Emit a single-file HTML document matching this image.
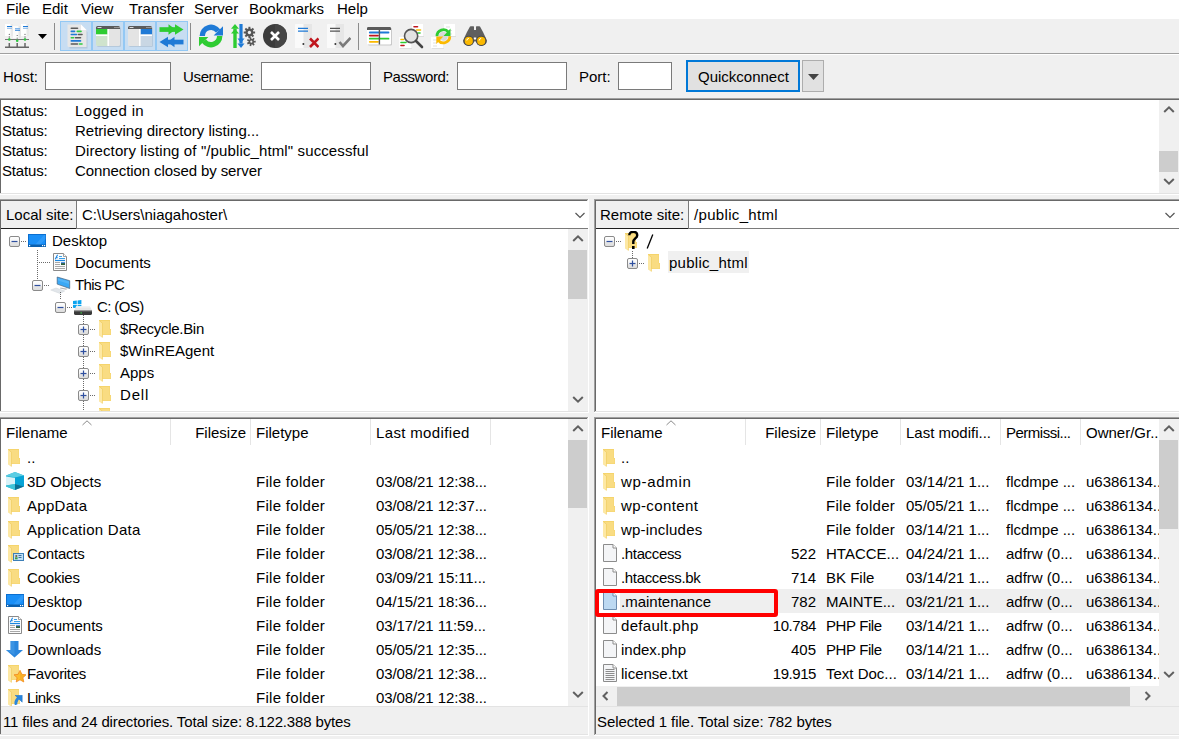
<!DOCTYPE html>
<html><head><meta charset="utf-8"><style>
html,body{margin:0;padding:0}
body{width:1179px;height:739px;overflow:hidden;position:relative;background:#f0f0f0;font-family:'Liberation Sans',sans-serif;color:#000;font-size:15px}
svg{display:block}
</style></head><body>
<div style="position:absolute;left:0px;top:0px;width:1179px;height:19px;background:#fff"></div>
<div style="position:absolute;left:6px;top:-1px;line-height:20px;font-size:15px;white-space:pre;">File</div>
<div style="position:absolute;left:42px;top:-1px;line-height:20px;font-size:15px;white-space:pre;">Edit</div>
<div style="position:absolute;left:81px;top:-1px;line-height:20px;font-size:15px;white-space:pre;">View</div>
<div style="position:absolute;left:129px;top:-1px;line-height:20px;font-size:15px;white-space:pre;">Transfer</div>
<div style="position:absolute;left:194px;top:-1px;line-height:20px;font-size:15px;white-space:pre;">Server</div>
<div style="position:absolute;left:249px;top:-1px;line-height:20px;font-size:15px;white-space:pre;">Bookmarks</div>
<div style="position:absolute;left:337px;top:-1px;line-height:20px;font-size:15px;white-space:pre;">Help</div>
<div style="position:absolute;left:0px;top:19px;width:1179px;height:34px;background:#f0f0f0"></div>
<div style="position:absolute;left:0px;top:53px;width:1179px;height:1px;background:#a0a0a0"></div>
<div style="position:absolute;left:0px;top:54px;width:1179px;height:1px;background:#fff"></div>
<svg style="position:absolute;left:5px;top:24px" width="24" height="24" viewBox="0 0 24 24"><rect x="0" y="0" width="8" height="12" fill="#fff"/><rect x="5.5" y="0" width="2.5" height="12" fill="#e9e9e9"/><rect x="16" y="0" width="8" height="12" fill="#fff"/><rect x="21.5" y="0" width="2.5" height="12" fill="#e9e9e9"/><rect x="8" y="2" width="8" height="12" fill="#fcfcfc"/><rect x="13.5" y="2" width="2.5" height="12" fill="#e6e6e6"/><path d="M2 2.5H7M18 2.5H23M10 6.3H15" stroke="#1f7ad6" stroke-width="1.1"/><path d="M2 4.2H7M18 4.2H23M10 4.6H15" stroke="#7fb4ea" stroke-width="1.1"/><circle cx="4.3" cy="10.3" r="0.6" fill="#555"/><circle cx="12.2" cy="11.5" r="0.6" fill="#555"/><circle cx="20" cy="10.3" r="0.6" fill="#555"/><path d="M4.3 12V15M12.2 13.5V16.5M20 12V15" stroke="#888" stroke-width="0.9"/><rect x="0" y="15" width="24" height="1" fill="#777"/><circle cx="4.3" cy="15.5" r="1.3" fill="#2ec840"/><circle cx="12.2" cy="16.7" r="1.3" fill="#2ec840"/><circle cx="20" cy="15.5" r="1.3" fill="#2ec840"/><path d="M4.3 19V23M12.2 19V23M20 19V23" stroke="#666" stroke-width="1.5"/><rect x="0" y="22.5" width="24" height="1.5" fill="#666"/></svg>
<svg style="position:absolute;left:38px;top:34px" width="9" height="5" viewBox="0 0 9 5"><path d="M0 0H9L4.5 5Z" fill="#000"/></svg>
<div style="position:absolute;left:54px;top:23px;width:1px;height:27px;background:#8c8c8c"></div>
<div style="position:absolute;left:60px;top:21px;width:32px;height:30px;background:#c7ddf2;border:1px solid #93c8f4;box-sizing:border-box"></div>
<div style="position:absolute;left:92px;top:21px;width:32px;height:30px;background:#c7ddf2;border:1px solid #93c8f4;box-sizing:border-box"></div>
<div style="position:absolute;left:124px;top:21px;width:32px;height:30px;background:#c7ddf2;border:1px solid #93c8f4;box-sizing:border-box"></div>
<div style="position:absolute;left:156px;top:21px;width:32px;height:30px;background:#c7ddf2;border:1px solid #93c8f4;box-sizing:border-box"></div>
<svg style="position:absolute;left:67px;top:24px" width="21" height="25" viewBox="0 0 21 25"><path d="M1.5 1.5H14L19.5 7V23.5H1.5Z" fill="#b3c8dc" transform="translate(1,1)"/><path d="M0.5 0.5H14L19.5 6V23H2A1.5 1.5 0 0 1 0.5 21.5Z" fill="#e7e7e7"/><path d="M14 0.5V6H19.5Z" fill="#fff"/><g stroke-linecap="round" stroke-width="1.6"><path d="M4.3 4.3H10.5" stroke="#5a5a5a"/><path d="M4.3 7.4H7.5" stroke="#1f7ad6"/><path d="M10.3 7.4H14" stroke="#2ecc40"/><path d="M4.3 10.5H9.5" stroke="#1f7ad6"/><path d="M11.5 10.5H15" stroke="#5a5a5a"/><path d="M4.3 13.7H6.5" stroke="#2ecc40"/><path d="M8.5 13.7H13.5" stroke="#5a5a5a"/><path d="M4.3 16.9H13.5" stroke="#1f7ad6"/><path d="M4.3 20H10.5" stroke="#5a5a5a"/><path d="M12.5 20H15" stroke="#2ecc40"/></g></svg>
<svg style="position:absolute;left:96px;top:26px" width="26" height="22" viewBox="0 0 26 22"><rect x="1" y="1" width="24" height="20" rx="1.5" fill="#b5c9dc"/><rect x="0" y="0" width="24" height="20" rx="1.5" fill="#e4e4e4"/><path d="M1.5 0H22.5A1.5 1.5 0 0 1 24 1.5V3H0V1.5A1.5 1.5 0 0 1 1.5 0Z" fill="#5a5a5a"/><rect x="0" y="3" width="11.5" height="5.5" fill="#2ecc32"/><rect x="0" y="8.5" width="11.5" height="1.5" fill="#fff"/><path d="M0 10H11.5V20H1.5A1.5 1.5 0 0 1 0 18.5Z" fill="#cfe3cd"/><rect x="11.5" y="3" width="1.5" height="17" fill="#fff"/><rect x="1.5" y="1" width="4" height="1" fill="#ddd"/><circle cx="19" cy="1.5" r="0.6" fill="#ddd"/><circle cx="21" cy="1.5" r="0.6" fill="#ddd"/><circle cx="23" cy="1.5" r="0.6" fill="#ddd"/></svg>
<svg style="position:absolute;left:128px;top:26px" width="26" height="22" viewBox="0 0 26 22"><rect x="1" y="1" width="24" height="20" rx="1.5" fill="#b5c9dc"/><rect x="0" y="0" width="24" height="20" rx="1.5" fill="#e4e4e4"/><path d="M1.5 0H22.5A1.5 1.5 0 0 1 24 1.5V3H0V1.5A1.5 1.5 0 0 1 1.5 0Z" fill="#5a5a5a"/><rect x="12.5" y="3" width="11.5" height="5.5" fill="#1f7ad6"/><rect x="12.5" y="8.5" width="11.5" height="1.5" fill="#fff"/><path d="M12.5 10H24V18.5A1.5 1.5 0 0 1 22.5 20H12.5Z" fill="#c9d7e4"/><rect x="11" y="3" width="1.5" height="17" fill="#fff"/><rect x="1.5" y="1" width="4" height="1" fill="#ddd"/><circle cx="19" cy="1.5" r="0.6" fill="#ddd"/><circle cx="21" cy="1.5" r="0.6" fill="#ddd"/><circle cx="23" cy="1.5" r="0.6" fill="#ddd"/></svg>
<svg style="position:absolute;left:159px;top:24px" width="25" height="24" viewBox="0 0 25 24"><path d="M0.5 3.2H20V7.9H0.5Z" fill="#2ecc32"/><path d="M9.5 0.2L16.5 5.5L9.5 10.8Z" fill="#2ecc32"/><path d="M16 0.2L24.5 5.5L16 10.8Z" fill="#2ecc32"/><path d="M24.5 15.7H5V20.4H24.5Z" fill="#1f7ad6"/><path d="M15.5 12.7L8.5 18L15.5 23.3Z" fill="#1f7ad6"/><path d="M9 12.7L0.5 18L9 23.3Z" fill="#1f7ad6"/></svg>
<div style="position:absolute;left:190px;top:23px;width:1px;height:27px;background:#8c8c8c"></div>
<svg style="position:absolute;left:199px;top:24px" width="24" height="24" viewBox="0 0 24 24"><path d="M3.3 12 A8.7 8.7 0 0 1 19.1 7" stroke="#1f7ad6" stroke-width="5.4" fill="none"/><path d="M24 2.3V11.6H14.6Z" fill="#1f7ad6"/><path d="M20.7 12 A8.7 8.7 0 0 1 4.9 17" stroke="#2ecc32" stroke-width="5.4" fill="none"/><path d="M0 22.2V12.9H9.4Z" fill="#2ecc32"/></svg>
<svg style="position:absolute;left:231px;top:24px" width="14" height="24" viewBox="0 0 14 24"><path d="M4 24V4.5" stroke="#2ecc32" stroke-width="3.4"/><path d="M4 0L8 4.8H0Z" fill="#2ecc32"/><path d="M4 5L8 9.5H0Z" fill="#2ecc32"/><path d="M10 0V19.5" stroke="#1f7ad6" stroke-width="3.2"/><path d="M10 24L13.5 19.5H6.5Z" fill="#1f7ad6"/><path d="M10 19L13.5 14.5H6.5Z" fill="#1f7ad6"/></svg>
<svg style="position:absolute;left:243px;top:24px" width="14" height="24" viewBox="0 0 14 24"><circle cx="6.4" cy="8.5" r="3.9" fill="#555"/><g stroke="#555" stroke-width="2.0"><path d="M9.30 8.50L12.10 8.50"/><path d="M8.45 10.55L10.43 12.53"/><path d="M6.40 11.40L6.40 14.20"/><path d="M4.35 10.55L2.37 12.53"/><path d="M3.50 8.50L0.70 8.50"/><path d="M4.35 6.45L2.37 4.47"/><path d="M6.40 5.60L6.40 2.80"/><path d="M8.45 6.45L10.43 4.47"/></g><circle cx="6.4" cy="8.5" r="1.64" fill="#f0f0f0"/><circle cx="8.3" cy="17.7" r="2.6" fill="#555"/><g stroke="#555" stroke-width="1.7"><path d="M9.90 17.70L12.70 17.70"/><path d="M9.30 18.95L11.04 21.14"/><path d="M7.94 19.26L7.32 21.99"/><path d="M6.86 18.39L4.34 19.61"/><path d="M6.86 17.01L4.34 15.79"/><path d="M7.94 16.14L7.32 13.41"/><path d="M9.30 16.45L11.04 14.26"/></g><circle cx="8.3" cy="17.7" r="1.09" fill="#f0f0f0"/></svg>
<svg style="position:absolute;left:263px;top:24px" width="24" height="24" viewBox="0 0 24 24"><circle cx="12" cy="12" r="12" fill="#3c3c3c"/><path d="M12 0A12 12 0 0 1 12 24Z" fill="#454545"/><path d="M8 8L16 16M16 8L8 16" stroke="#fff" stroke-width="2.6"/></svg>
<svg style="position:absolute;left:295px;top:24px" width="24" height="24" viewBox="0 0 24 24"><rect x="0" y="0" width="17" height="24" rx="0.5" fill="#fafafa"/><rect x="8.5" y="0" width="8.5" height="24" fill="#e6e6e6"/><path d="M3 4.3H13M3 7.2H13" stroke="#1f7ad6" stroke-width="1.3"/><circle cx="8.4" cy="20" r="1" fill="#333"/><path d="M15 14.5L23.5 23M23.5 14.5L15 23" stroke="#c0161e" stroke-width="2.6"/></svg>
<svg style="position:absolute;left:327px;top:24px" width="24" height="24" viewBox="0 0 24 24"><rect x="0" y="0" width="17" height="24" rx="0.5" fill="#fafafa"/><rect x="8.5" y="0" width="8.5" height="24" fill="#e6e6e6"/><path d="M3 4.3H13M3 7.2H13" stroke="#555" stroke-width="1.3"/><circle cx="8.4" cy="20" r="1" fill="#333"/><path d="M12.5 18L16 22L23.5 14" stroke="#7a7a7a" stroke-width="2.6" fill="none"/></svg>
<div style="position:absolute;left:358px;top:23px;width:1px;height:27px;background:#8c8c8c"></div>
<svg style="position:absolute;left:367px;top:27px" width="26" height="19" viewBox="0 0 26 19"><rect x="1" y="1" width="24" height="17.5" rx="1.2" fill="#c9c9c9"/><rect x="0" y="0" width="24" height="17.5" rx="1.2" fill="#fff"/><path d="M1.2 0H22.8A1.2 1.2 0 0 1 24 1.2V3H0V1.2A1.2 1.2 0 0 1 1.2 0Z" fill="#5a5a5a"/><g stroke-width="1.8" stroke-linecap="round"><path d="M2.8 5.5H21.5" stroke="#1f7ad6"/><path d="M2.8 8.6H11" stroke="#c0161e"/><path d="M2.8 11.7H21.5" stroke="#2ecc32"/><path d="M2.8 14.8H11" stroke="#fbb900"/></g><rect x="11.7" y="3" width="1.4" height="14.5" fill="#555"/></svg>
<svg style="position:absolute;left:399px;top:24px" width="25" height="25" viewBox="0 0 25 25"><rect x="13" y="0" width="11" height="12" fill="#fff"/><rect x="14" y="12" width="11" height="1" fill="#ddd"/><path d="M15 2.7H18.5" stroke="#c0161e" stroke-width="1.6" stroke-linecap="round"/><path d="M17.5 6H21.5" stroke="#fbb900" stroke-width="1.6" stroke-linecap="round"/><path d="M19 9H21" stroke="#2ecc32" stroke-width="1.6" stroke-linecap="round"/><rect x="0.2" y="13" width="12" height="11" fill="#fff"/><rect x="1" y="24" width="12" height="0.8" fill="#ddd"/><path d="M2 15.5H4.5" stroke="#fbb900" stroke-width="1.6" stroke-linecap="round"/><path d="M2 18.5H7" stroke="#2ecc32" stroke-width="1.6" stroke-linecap="round"/><path d="M2 21.5H5" stroke="#c0161e" stroke-width="1.6" stroke-linecap="round"/><circle cx="12.1" cy="12" r="6.6" fill="#e2e2e2" stroke="#555" stroke-width="1.6"/><path d="M17 17L23 23" stroke="#444" stroke-width="2.6" stroke-linecap="round"/></svg>
<svg style="position:absolute;left:431px;top:24px" width="25" height="25" viewBox="0 0 25 25"><rect x="13" y="0" width="11" height="12" fill="#fff"/><rect x="14" y="12" width="11" height="1" fill="#ddd"/><path d="M15 3H19M17 6.5H21M17 10H21" stroke="#e0e0e0" stroke-width="1.2"/><rect x="0" y="13" width="12" height="11" fill="#fff"/><rect x="1" y="24" width="12" height="0.8" fill="#ddd"/><path d="M2 16H6M2 19H6M2 22H6" stroke="#e0e0e0" stroke-width="1.2"/><circle cx="12.4" cy="12.3" r="4.5" fill="#d8d8d8"/><path d="M6 12.3A6.4 6.4 0 0 1 17.5 8.3" stroke="#2ecc32" stroke-width="2.8" fill="none"/><path d="M19.5 4.5V12H12.5Z" fill="#2ecc32"/><path d="M18.8 12.3A6.4 6.4 0 0 1 7.3 16.3" stroke="#fbb900" stroke-width="2.8" fill="none"/><path d="M5.3 20V12.5H12.3Z" fill="#fbb900"/></svg>
<svg style="position:absolute;left:463px;top:26px" width="24" height="21" viewBox="0 0 24 21"><path d="M7 0.5C8 0 10 0 11 0.5V4H13V0.5C14 0 16 0 17 0.5L20 6L24 14.5A5.5 5.5 0 0 1 13.5 16.5L12 15L10.5 16.5A5.5 5.5 0 0 1 0 14.5L4 6Z" fill="#5f5f5f"/><rect x="10.8" y="11.5" width="2.4" height="2" fill="#fff"/><circle cx="5.8" cy="14.9" r="5.1" fill="#4a4a4a"/><circle cx="18.2" cy="14.9" r="5.1" fill="#4a4a4a"/><circle cx="5.8" cy="14.9" r="4.1" fill="#fbb900"/><circle cx="18.2" cy="14.9" r="4.1" fill="#fbb900"/><path d="M3.8 14.5A2.3 2.3 0 0 1 5.8 12.4" stroke="#fff" stroke-width="1" fill="none"/><path d="M16.2 14.5A2.3 2.3 0 0 1 18.2 12.4" stroke="#fff" stroke-width="1" fill="none"/></svg>
<div style="position:absolute;left:3px;top:67px;line-height:20px;font-size:15px;white-space:pre;">Host:</div>
<div style="position:absolute;left:45px;top:62px;width:126px;height:28px;background:#fff;border:1px solid #7a7a7a;box-sizing:border-box"></div>
<div style="position:absolute;left:183px;top:67px;line-height:20px;font-size:15px;white-space:pre;letter-spacing:-0.35px">Username:</div>
<div style="position:absolute;left:261px;top:62px;width:110px;height:28px;background:#fff;border:1px solid #7a7a7a;box-sizing:border-box"></div>
<div style="position:absolute;left:383px;top:67px;line-height:20px;font-size:15px;white-space:pre;letter-spacing:-0.44px">Password:</div>
<div style="position:absolute;left:457px;top:62px;width:110px;height:28px;background:#fff;border:1px solid #7a7a7a;box-sizing:border-box"></div>
<div style="position:absolute;left:579px;top:67px;line-height:20px;font-size:15px;white-space:pre;">Port:</div>
<div style="position:absolute;left:618px;top:62px;width:54px;height:28px;background:#fff;border:1px solid #7a7a7a;box-sizing:border-box"></div>
<div style="position:absolute;left:686px;top:60px;width:114px;height:32px;background:#e1e1e1;border:2px solid #0078d7;box-sizing:border-box"></div>
<div style="position:absolute;left:698px;top:67px;line-height:20px;font-size:15px;white-space:pre;">Quickconnect</div>
<div style="position:absolute;left:802px;top:60px;width:22px;height:32px;background:#e1e1e1;border:1px solid #adadad;box-sizing:border-box"></div>
<svg style="position:absolute;left:808px;top:74px" width="11" height="6" viewBox="0 0 11 6"><path d="M0 0H11L5.5 6Z" fill="#444"/></svg>
<div style="position:absolute;left:-1px;top:98px;width:1182px;height:1px;background:#a0a0a0"></div>
<div style="position:absolute;left:-1px;top:98px;width:1px;height:97px;background:#a0a0a0"></div>
<div style="position:absolute;left:-1px;top:194px;width:1182px;height:1px;background:#fff"></div>
<div style="position:absolute;left:1180px;top:98px;width:1px;height:97px;background:#fff"></div>
<div style="position:absolute;left:0px;top:99px;width:1180px;height:1px;background:#696969"></div>
<div style="position:absolute;left:0px;top:99px;width:1px;height:95px;background:#696969"></div>
<div style="position:absolute;left:0px;top:193px;width:1180px;height:1px;background:#e3e3e3"></div>
<div style="position:absolute;left:1179px;top:99px;width:1px;height:95px;background:#e3e3e3"></div>
<div style="position:absolute;left:1px;top:100px;width:1178px;height:93px;background:#fff"></div>
<div style="position:absolute;left:2px;top:101px;line-height:20px;font-size:15px;white-space:pre;letter-spacing:-0.15px">Status:</div>
<div style="position:absolute;left:75px;top:101px;line-height:20px;font-size:15px;white-space:pre;letter-spacing:0.35px">Logged in</div>
<div style="position:absolute;left:2px;top:121px;line-height:20px;font-size:15px;white-space:pre;letter-spacing:-0.15px">Status:</div>
<div style="position:absolute;left:75px;top:121px;line-height:20px;font-size:15px;white-space:pre;">Retrieving directory listing...</div>
<div style="position:absolute;left:2px;top:141px;line-height:20px;font-size:15px;white-space:pre;letter-spacing:-0.15px">Status:</div>
<div style="position:absolute;left:75px;top:141px;line-height:20px;font-size:15px;white-space:pre;letter-spacing:0.12px">Directory listing of "/public_html" successful</div>
<div style="position:absolute;left:2px;top:161px;line-height:20px;font-size:15px;white-space:pre;letter-spacing:-0.15px">Status:</div>
<div style="position:absolute;left:75px;top:161px;line-height:20px;font-size:15px;white-space:pre;letter-spacing:-0.09px">Connection closed by server</div>
<div style="position:absolute;left:1159px;top:100px;width:20px;height:93px;background:#f0f0f0"></div>
<div style="position:absolute;left:1159px;top:151px;width:19px;height:21px;background:#cdcdcd"></div>
<svg style="position:absolute;left:1163px;top:105px" width="12" height="9" viewBox="0 0 12 9"><path d="M1.2 7L6 2.3L10.8 7" stroke="#606060" stroke-width="2" fill="none"/></svg>
<svg style="position:absolute;left:1163px;top:177px" width="12" height="9" viewBox="0 0 12 9"><path d="M1.2 2L6 6.7L10.8 2" stroke="#606060" stroke-width="2" fill="none"/></svg>
<div style="position:absolute;left:-1px;top:199px;width:590px;height:1px;background:#a0a0a0"></div>
<div style="position:absolute;left:-1px;top:199px;width:1px;height:214px;background:#a0a0a0"></div>
<div style="position:absolute;left:-1px;top:412px;width:590px;height:1px;background:#fff"></div>
<div style="position:absolute;left:588px;top:199px;width:1px;height:214px;background:#fff"></div>
<div style="position:absolute;left:0px;top:200px;width:588px;height:1px;background:#696969"></div>
<div style="position:absolute;left:0px;top:200px;width:1px;height:212px;background:#696969"></div>
<div style="position:absolute;left:0px;top:411px;width:588px;height:1px;background:#e3e3e3"></div>
<div style="position:absolute;left:587px;top:200px;width:1px;height:212px;background:#e3e3e3"></div>
<div style="position:absolute;left:1px;top:201px;width:587px;height:210px;background:#fff"></div>
<div style="position:absolute;left:1px;top:201px;width:75px;height:27px;background:#f0f0f0"></div>
<div style="position:absolute;left:1px;top:228px;width:75px;height:1px;background:#1e1e1e"></div>
<div style="position:absolute;left:76px;top:201px;width:1px;height:28px;background:#7a7a7a"></div>
<div style="position:absolute;left:76px;top:228px;width:512px;height:1px;background:#7a7a7a"></div>
<div style="position:absolute;left:6px;top:205px;line-height:20px;font-size:15px;white-space:pre;">Local site:</div>
<div style="position:absolute;left:82px;top:205px;line-height:20px;font-size:15px;white-space:pre;">C:\Users\niagahoster\</div>
<svg style="position:absolute;left:575px;top:212px" width="10" height="7" viewBox="0 0 10 7"><path d="M0.5 1L5 5.5L9.5 1" stroke="#555" stroke-width="1.2" fill="none"/></svg>
<div style="position:absolute;left:568px;top:229px;width:20px;height:182px;background:#f0f0f0"></div>
<div style="position:absolute;left:568px;top:250px;width:19px;height:49px;background:#cdcdcd"></div>
<svg style="position:absolute;left:572px;top:234px" width="12" height="9" viewBox="0 0 12 9"><path d="M1.2 7L6 2.3L10.8 7" stroke="#606060" stroke-width="2" fill="none"/></svg>
<svg style="position:absolute;left:572px;top:395px" width="12" height="9" viewBox="0 0 12 9"><path d="M1.2 2L6 6.7L10.8 2" stroke="#606060" stroke-width="2" fill="none"/></svg>
<div style="position:absolute;left:594px;top:199px;width:590px;height:1px;background:#a0a0a0"></div>
<div style="position:absolute;left:594px;top:199px;width:1px;height:214px;background:#a0a0a0"></div>
<div style="position:absolute;left:594px;top:412px;width:590px;height:1px;background:#fff"></div>
<div style="position:absolute;left:1183px;top:199px;width:1px;height:214px;background:#fff"></div>
<div style="position:absolute;left:595px;top:200px;width:588px;height:1px;background:#696969"></div>
<div style="position:absolute;left:595px;top:200px;width:1px;height:212px;background:#696969"></div>
<div style="position:absolute;left:595px;top:411px;width:588px;height:1px;background:#e3e3e3"></div>
<div style="position:absolute;left:1182px;top:200px;width:1px;height:212px;background:#e3e3e3"></div>
<div style="position:absolute;left:596px;top:201px;width:583px;height:210px;background:#fff"></div>
<div style="position:absolute;left:596px;top:201px;width:92px;height:27px;background:#f0f0f0"></div>
<div style="position:absolute;left:596px;top:228px;width:92px;height:1px;background:#1e1e1e"></div>
<div style="position:absolute;left:688px;top:201px;width:1px;height:28px;background:#7a7a7a"></div>
<div style="position:absolute;left:688px;top:228px;width:491px;height:1px;background:#7a7a7a"></div>
<div style="position:absolute;left:600px;top:205px;line-height:20px;font-size:15px;white-space:pre;">Remote site:</div>
<div style="position:absolute;left:694px;top:205px;line-height:20px;font-size:15px;white-space:pre;letter-spacing:0.33px">/public_html</div>
<svg style="position:absolute;left:1165px;top:212px" width="10" height="7" viewBox="0 0 10 7"><path d="M0.5 1L5 5.5L9.5 1" stroke="#555" stroke-width="1.2" fill="none"/></svg>
<div style="position:absolute;left:1px;top:229px;width:567px;height:182px;overflow:hidden"><div style="position:absolute;left:-1px;top:-229px;width:1179px;height:739px"><svg style="position:absolute;left:9px;top:236px" width="11" height="11" viewBox="0 0 11 11"><defs><linearGradient id="eg" x1="0" y1="0" x2="0" y2="1"><stop offset="0" stop-color="#fff"/><stop offset="0.5" stop-color="#f4f4f4"/><stop offset="0.55" stop-color="#e6e6e6"/><stop offset="1" stop-color="#dcdcdc"/></linearGradient></defs><rect x="0.5" y="0.5" width="10" height="10" rx="1.5" fill="url(#eg)" stroke="#8a8a8a"/><path d="M2.5 5.5H8.5" stroke="#2f4f9f" stroke-width="1.2"/></svg>
<div style="position:absolute;left:21px;top:241px;width:1px;height:1px;background:#6a6a6a"></div>
<div style="position:absolute;left:23px;top:241px;width:1px;height:1px;background:#6a6a6a"></div>
<div style="position:absolute;left:25px;top:241px;width:1px;height:1px;background:#6a6a6a"></div>
<svg style="position:absolute;left:28px;top:234px" width="18" height="13" viewBox="0 0 18 13"><rect x="0.5" y="0.5" width="17" height="12" fill="#1a8ff7" stroke="#0b6fd0"/><path d="M6 12L16 1H17.5V5L11 12Z" fill="#3aa2fb" opacity="0.6"/><rect x="0" y="10.5" width="18" height="2.5" fill="#0a5fae"/><rect x="1" y="11" width="1.2" height="1.2" fill="#fff"/><rect x="14" y="11" width="1.2" height="1.2" fill="#fff"/><rect x="16" y="11" width="1.2" height="1.2" fill="#fff"/></svg>
<div style="position:absolute;left:52px;top:231px;line-height:20px;font-size:15px;white-space:pre;">Desktop</div>
<div style="position:absolute;left:37px;top:250px;width:1px;height:1px;background:#6a6a6a"></div>
<div style="position:absolute;left:37px;top:252px;width:1px;height:1px;background:#6a6a6a"></div>
<div style="position:absolute;left:37px;top:254px;width:1px;height:1px;background:#6a6a6a"></div>
<div style="position:absolute;left:37px;top:256px;width:1px;height:1px;background:#6a6a6a"></div>
<div style="position:absolute;left:37px;top:258px;width:1px;height:1px;background:#6a6a6a"></div>
<div style="position:absolute;left:37px;top:260px;width:1px;height:1px;background:#6a6a6a"></div>
<div style="position:absolute;left:37px;top:262px;width:1px;height:1px;background:#6a6a6a"></div>
<div style="position:absolute;left:37px;top:264px;width:1px;height:1px;background:#6a6a6a"></div>
<div style="position:absolute;left:37px;top:266px;width:1px;height:1px;background:#6a6a6a"></div>
<div style="position:absolute;left:37px;top:268px;width:1px;height:1px;background:#6a6a6a"></div>
<div style="position:absolute;left:37px;top:270px;width:1px;height:1px;background:#6a6a6a"></div>
<div style="position:absolute;left:37px;top:272px;width:1px;height:1px;background:#6a6a6a"></div>
<div style="position:absolute;left:37px;top:274px;width:1px;height:1px;background:#6a6a6a"></div>
<div style="position:absolute;left:37px;top:276px;width:1px;height:1px;background:#6a6a6a"></div>
<div style="position:absolute;left:37px;top:278px;width:1px;height:1px;background:#6a6a6a"></div>
<div style="position:absolute;left:39px;top:262px;width:1px;height:1px;background:#6a6a6a"></div>
<div style="position:absolute;left:41px;top:262px;width:1px;height:1px;background:#6a6a6a"></div>
<div style="position:absolute;left:43px;top:262px;width:1px;height:1px;background:#6a6a6a"></div>
<div style="position:absolute;left:45px;top:262px;width:1px;height:1px;background:#6a6a6a"></div>
<div style="position:absolute;left:47px;top:262px;width:1px;height:1px;background:#6a6a6a"></div>
<div style="position:absolute;left:49px;top:262px;width:1px;height:1px;background:#6a6a6a"></div>
<svg style="position:absolute;left:53px;top:253px" width="14" height="18" viewBox="0 0 14 18"><path d="M0.5 0.5H10.5L13.5 3.5V17.5H0.5Z" fill="#fcfcfc" stroke="#8a8a8a"/><path d="M10.5 0.5V3.5H13.5" fill="#fff" stroke="#8a8a8a" stroke-width="0.8"/><path d="M2.2 6.3L4.6 1.8M3 4.8H4.8" stroke="#1e88e5" stroke-width="1.1"/><path d="M6 3.5H9M6 5.5H12" stroke="#3aa0ea" stroke-width="1"/><path d="M2 7.5H12" stroke="#1a86e0" stroke-width="1.2"/><path d="M2 9.5H7M2 11.5H7M2 13.5H12M2 15.5H12" stroke="#a8a8a8" stroke-width="1"/><rect x="8" y="9" width="4" height="3" fill="#2f5f3a"/><rect x="8" y="9" width="4" height="1.2" fill="#5a90e0"/></svg>
<div style="position:absolute;left:75px;top:253px;line-height:20px;font-size:15px;white-space:pre;">Documents</div>
<svg style="position:absolute;left:32px;top:280px" width="11" height="11" viewBox="0 0 11 11"><defs><linearGradient id="eg" x1="0" y1="0" x2="0" y2="1"><stop offset="0" stop-color="#fff"/><stop offset="0.5" stop-color="#f4f4f4"/><stop offset="0.55" stop-color="#e6e6e6"/><stop offset="1" stop-color="#dcdcdc"/></linearGradient></defs><rect x="0.5" y="0.5" width="10" height="10" rx="1.5" fill="url(#eg)" stroke="#8a8a8a"/><path d="M2.5 5.5H8.5" stroke="#2f4f9f" stroke-width="1.2"/></svg>
<div style="position:absolute;left:44px;top:285px;width:1px;height:1px;background:#6a6a6a"></div>
<div style="position:absolute;left:46px;top:285px;width:1px;height:1px;background:#6a6a6a"></div>
<div style="position:absolute;left:48px;top:285px;width:1px;height:1px;background:#6a6a6a"></div>
<svg style="position:absolute;left:50px;top:276px" width="22" height="18" viewBox="0 0 22 18"><path d="M7.2 1L19.7 4.7V12.5L7.2 8.1Z" fill="#3aa8f5" stroke="#43607c" stroke-width="0.7"/><path d="M8 2.2L19 5.4V8L8 4.5Z" fill="#6cc0fa" opacity="0.5"/><path d="M10.3 11.6L17.8 12.8L16 13.8L10 12.6Z" fill="#b8b8b8"/><path d="M0.7 14L6 12L14.7 15L10 17.5Z" fill="#e2e6ea" stroke="#cfd4d8" stroke-width="0.5"/></svg>
<div style="position:absolute;left:75px;top:275px;line-height:20px;font-size:15px;white-space:pre;letter-spacing:-0.6px">This PC</div>
<div style="position:absolute;left:60px;top:292px;width:1px;height:1px;background:#6a6a6a"></div>
<div style="position:absolute;left:60px;top:294px;width:1px;height:1px;background:#6a6a6a"></div>
<div style="position:absolute;left:60px;top:296px;width:1px;height:1px;background:#6a6a6a"></div>
<div style="position:absolute;left:60px;top:298px;width:1px;height:1px;background:#6a6a6a"></div>
<svg style="position:absolute;left:55px;top:302px" width="11" height="11" viewBox="0 0 11 11"><defs><linearGradient id="eg" x1="0" y1="0" x2="0" y2="1"><stop offset="0" stop-color="#fff"/><stop offset="0.5" stop-color="#f4f4f4"/><stop offset="0.55" stop-color="#e6e6e6"/><stop offset="1" stop-color="#dcdcdc"/></linearGradient></defs><rect x="0.5" y="0.5" width="10" height="10" rx="1.5" fill="url(#eg)" stroke="#8a8a8a"/><path d="M2.5 5.5H8.5" stroke="#2f4f9f" stroke-width="1.2"/></svg>
<div style="position:absolute;left:67px;top:307px;width:1px;height:1px;background:#6a6a6a"></div>
<div style="position:absolute;left:69px;top:307px;width:1px;height:1px;background:#6a6a6a"></div>
<div style="position:absolute;left:71px;top:307px;width:1px;height:1px;background:#6a6a6a"></div>
<svg style="position:absolute;left:73px;top:300px" width="20" height="15" viewBox="0 0 20 15"><path d="M0 1L3.8 0.5V4H0Z" fill="#0aa4ef"/><path d="M4.6 0.4L8.4 0V4H4.6Z" fill="#0aa4ef"/><path d="M0 4.8H3.8V8.3L0 7.8Z" fill="#0aa4ef"/><path d="M4.6 4.8H8.4V8.8L4.6 8.4Z" fill="#0aa4ef"/><path d="M1 10.5L3.2 6.3H16.8L19 10.5Z" fill="#e6e6e6"/><path d="M3.2 6.3H16.8L17.5 7.5H2.6Z" fill="#f4f4f4"/><path d="M1 10.5H19V13.6C19 14.4 18.5 15 17.7 15H2.3C1.5 15 1 14.4 1 13.6Z" fill="#3a3a3a"/><path d="M1 10.5H19V11.3H1Z" fill="#9a9a9a"/><rect x="7.5" y="12.3" width="1.4" height="1.2" fill="#3fd04a"/></svg>
<div style="position:absolute;left:97px;top:297px;line-height:20px;font-size:15px;white-space:pre;letter-spacing:-0.6px">C: (OS)</div>
<div style="position:absolute;left:83px;top:315px;width:1px;height:1px;background:#6a6a6a"></div>
<div style="position:absolute;left:83px;top:317px;width:1px;height:1px;background:#6a6a6a"></div>
<div style="position:absolute;left:83px;top:319px;width:1px;height:1px;background:#6a6a6a"></div>
<div style="position:absolute;left:83px;top:321px;width:1px;height:1px;background:#6a6a6a"></div>
<div style="position:absolute;left:83px;top:323px;width:1px;height:1px;background:#6a6a6a"></div>
<div style="position:absolute;left:83px;top:325px;width:1px;height:1px;background:#6a6a6a"></div>
<div style="position:absolute;left:83px;top:327px;width:1px;height:1px;background:#6a6a6a"></div>
<div style="position:absolute;left:83px;top:329px;width:1px;height:1px;background:#6a6a6a"></div>
<div style="position:absolute;left:83px;top:331px;width:1px;height:1px;background:#6a6a6a"></div>
<div style="position:absolute;left:83px;top:333px;width:1px;height:1px;background:#6a6a6a"></div>
<div style="position:absolute;left:83px;top:335px;width:1px;height:1px;background:#6a6a6a"></div>
<div style="position:absolute;left:83px;top:337px;width:1px;height:1px;background:#6a6a6a"></div>
<div style="position:absolute;left:83px;top:339px;width:1px;height:1px;background:#6a6a6a"></div>
<div style="position:absolute;left:83px;top:341px;width:1px;height:1px;background:#6a6a6a"></div>
<div style="position:absolute;left:83px;top:343px;width:1px;height:1px;background:#6a6a6a"></div>
<div style="position:absolute;left:83px;top:345px;width:1px;height:1px;background:#6a6a6a"></div>
<div style="position:absolute;left:83px;top:347px;width:1px;height:1px;background:#6a6a6a"></div>
<div style="position:absolute;left:83px;top:349px;width:1px;height:1px;background:#6a6a6a"></div>
<div style="position:absolute;left:83px;top:351px;width:1px;height:1px;background:#6a6a6a"></div>
<div style="position:absolute;left:83px;top:353px;width:1px;height:1px;background:#6a6a6a"></div>
<div style="position:absolute;left:83px;top:355px;width:1px;height:1px;background:#6a6a6a"></div>
<div style="position:absolute;left:83px;top:357px;width:1px;height:1px;background:#6a6a6a"></div>
<div style="position:absolute;left:83px;top:359px;width:1px;height:1px;background:#6a6a6a"></div>
<div style="position:absolute;left:83px;top:361px;width:1px;height:1px;background:#6a6a6a"></div>
<div style="position:absolute;left:83px;top:363px;width:1px;height:1px;background:#6a6a6a"></div>
<div style="position:absolute;left:83px;top:365px;width:1px;height:1px;background:#6a6a6a"></div>
<div style="position:absolute;left:83px;top:367px;width:1px;height:1px;background:#6a6a6a"></div>
<div style="position:absolute;left:83px;top:369px;width:1px;height:1px;background:#6a6a6a"></div>
<div style="position:absolute;left:83px;top:371px;width:1px;height:1px;background:#6a6a6a"></div>
<div style="position:absolute;left:83px;top:373px;width:1px;height:1px;background:#6a6a6a"></div>
<div style="position:absolute;left:83px;top:375px;width:1px;height:1px;background:#6a6a6a"></div>
<div style="position:absolute;left:83px;top:377px;width:1px;height:1px;background:#6a6a6a"></div>
<div style="position:absolute;left:83px;top:379px;width:1px;height:1px;background:#6a6a6a"></div>
<div style="position:absolute;left:83px;top:381px;width:1px;height:1px;background:#6a6a6a"></div>
<div style="position:absolute;left:83px;top:383px;width:1px;height:1px;background:#6a6a6a"></div>
<div style="position:absolute;left:83px;top:385px;width:1px;height:1px;background:#6a6a6a"></div>
<div style="position:absolute;left:83px;top:387px;width:1px;height:1px;background:#6a6a6a"></div>
<div style="position:absolute;left:83px;top:389px;width:1px;height:1px;background:#6a6a6a"></div>
<div style="position:absolute;left:83px;top:391px;width:1px;height:1px;background:#6a6a6a"></div>
<div style="position:absolute;left:83px;top:393px;width:1px;height:1px;background:#6a6a6a"></div>
<div style="position:absolute;left:83px;top:395px;width:1px;height:1px;background:#6a6a6a"></div>
<div style="position:absolute;left:83px;top:397px;width:1px;height:1px;background:#6a6a6a"></div>
<div style="position:absolute;left:83px;top:399px;width:1px;height:1px;background:#6a6a6a"></div>
<div style="position:absolute;left:83px;top:401px;width:1px;height:1px;background:#6a6a6a"></div>
<div style="position:absolute;left:83px;top:403px;width:1px;height:1px;background:#6a6a6a"></div>
<div style="position:absolute;left:83px;top:405px;width:1px;height:1px;background:#6a6a6a"></div>
<div style="position:absolute;left:83px;top:407px;width:1px;height:1px;background:#6a6a6a"></div>
<div style="position:absolute;left:83px;top:409px;width:1px;height:1px;background:#6a6a6a"></div>
<svg style="position:absolute;left:78px;top:324px" width="11" height="11" viewBox="0 0 11 11"><defs><linearGradient id="eg" x1="0" y1="0" x2="0" y2="1"><stop offset="0" stop-color="#fff"/><stop offset="0.5" stop-color="#f4f4f4"/><stop offset="0.55" stop-color="#e6e6e6"/><stop offset="1" stop-color="#dcdcdc"/></linearGradient></defs><rect x="0.5" y="0.5" width="10" height="10" rx="1.5" fill="url(#eg)" stroke="#8a8a8a"/><path d="M2.5 5.5H8.5" stroke="#2f4f9f" stroke-width="1.2"/><path d="M5.5 2.5V8.5" stroke="#2f4f9f" stroke-width="1.2"/></svg>
<div style="position:absolute;left:90px;top:329px;width:1px;height:1px;background:#6a6a6a"></div>
<div style="position:absolute;left:92px;top:329px;width:1px;height:1px;background:#6a6a6a"></div>
<div style="position:absolute;left:94px;top:329px;width:1px;height:1px;background:#6a6a6a"></div>
<svg style="position:absolute;left:99px;top:320px" width="13" height="18" viewBox="0 0 13 18"><defs><linearGradient id="fg" x1="0" y1="0" x2="0" y2="1"><stop offset="0" stop-color="#f8dc7e"/><stop offset="1" stop-color="#f3cf62"/></linearGradient></defs><path d="M0 0H11V9H12V15H3V17.5L0 15Z" fill="#f5d46c"/><path d="M1 1H10.5V9.5H11.5V14.5H3.5V3.5Z" fill="#f9dc82"/><path d="M0 0.3L3.5 3.3V17.6L0 15Z" fill="#fde8a4"/><path d="M0 0.3L3.5 3.3V17.6" stroke="#efc95a" stroke-width="0.6" fill="none"/></svg>
<div style="position:absolute;left:120px;top:319px;line-height:20px;font-size:15px;white-space:pre;letter-spacing:-0.3px">$Recycle.Bin</div>
<svg style="position:absolute;left:78px;top:346px" width="11" height="11" viewBox="0 0 11 11"><defs><linearGradient id="eg" x1="0" y1="0" x2="0" y2="1"><stop offset="0" stop-color="#fff"/><stop offset="0.5" stop-color="#f4f4f4"/><stop offset="0.55" stop-color="#e6e6e6"/><stop offset="1" stop-color="#dcdcdc"/></linearGradient></defs><rect x="0.5" y="0.5" width="10" height="10" rx="1.5" fill="url(#eg)" stroke="#8a8a8a"/><path d="M2.5 5.5H8.5" stroke="#2f4f9f" stroke-width="1.2"/><path d="M5.5 2.5V8.5" stroke="#2f4f9f" stroke-width="1.2"/></svg>
<div style="position:absolute;left:90px;top:351px;width:1px;height:1px;background:#6a6a6a"></div>
<div style="position:absolute;left:92px;top:351px;width:1px;height:1px;background:#6a6a6a"></div>
<div style="position:absolute;left:94px;top:351px;width:1px;height:1px;background:#6a6a6a"></div>
<svg style="position:absolute;left:99px;top:342px" width="13" height="18" viewBox="0 0 13 18"><defs><linearGradient id="fg" x1="0" y1="0" x2="0" y2="1"><stop offset="0" stop-color="#f8dc7e"/><stop offset="1" stop-color="#f3cf62"/></linearGradient></defs><path d="M0 0H11V9H12V15H3V17.5L0 15Z" fill="#f5d46c"/><path d="M1 1H10.5V9.5H11.5V14.5H3.5V3.5Z" fill="#f9dc82"/><path d="M0 0.3L3.5 3.3V17.6L0 15Z" fill="#fde8a4"/><path d="M0 0.3L3.5 3.3V17.6" stroke="#efc95a" stroke-width="0.6" fill="none"/></svg>
<div style="position:absolute;left:120px;top:341px;line-height:20px;font-size:15px;white-space:pre;">$WinREAgent</div>
<svg style="position:absolute;left:78px;top:368px" width="11" height="11" viewBox="0 0 11 11"><defs><linearGradient id="eg" x1="0" y1="0" x2="0" y2="1"><stop offset="0" stop-color="#fff"/><stop offset="0.5" stop-color="#f4f4f4"/><stop offset="0.55" stop-color="#e6e6e6"/><stop offset="1" stop-color="#dcdcdc"/></linearGradient></defs><rect x="0.5" y="0.5" width="10" height="10" rx="1.5" fill="url(#eg)" stroke="#8a8a8a"/><path d="M2.5 5.5H8.5" stroke="#2f4f9f" stroke-width="1.2"/><path d="M5.5 2.5V8.5" stroke="#2f4f9f" stroke-width="1.2"/></svg>
<div style="position:absolute;left:90px;top:373px;width:1px;height:1px;background:#6a6a6a"></div>
<div style="position:absolute;left:92px;top:373px;width:1px;height:1px;background:#6a6a6a"></div>
<div style="position:absolute;left:94px;top:373px;width:1px;height:1px;background:#6a6a6a"></div>
<svg style="position:absolute;left:99px;top:364px" width="13" height="18" viewBox="0 0 13 18"><defs><linearGradient id="fg" x1="0" y1="0" x2="0" y2="1"><stop offset="0" stop-color="#f8dc7e"/><stop offset="1" stop-color="#f3cf62"/></linearGradient></defs><path d="M0 0H11V9H12V15H3V17.5L0 15Z" fill="#f5d46c"/><path d="M1 1H10.5V9.5H11.5V14.5H3.5V3.5Z" fill="#f9dc82"/><path d="M0 0.3L3.5 3.3V17.6L0 15Z" fill="#fde8a4"/><path d="M0 0.3L3.5 3.3V17.6" stroke="#efc95a" stroke-width="0.6" fill="none"/></svg>
<div style="position:absolute;left:120px;top:363px;line-height:20px;font-size:15px;white-space:pre;">Apps</div>
<svg style="position:absolute;left:78px;top:390px" width="11" height="11" viewBox="0 0 11 11"><defs><linearGradient id="eg" x1="0" y1="0" x2="0" y2="1"><stop offset="0" stop-color="#fff"/><stop offset="0.5" stop-color="#f4f4f4"/><stop offset="0.55" stop-color="#e6e6e6"/><stop offset="1" stop-color="#dcdcdc"/></linearGradient></defs><rect x="0.5" y="0.5" width="10" height="10" rx="1.5" fill="url(#eg)" stroke="#8a8a8a"/><path d="M2.5 5.5H8.5" stroke="#2f4f9f" stroke-width="1.2"/><path d="M5.5 2.5V8.5" stroke="#2f4f9f" stroke-width="1.2"/></svg>
<div style="position:absolute;left:90px;top:395px;width:1px;height:1px;background:#6a6a6a"></div>
<div style="position:absolute;left:92px;top:395px;width:1px;height:1px;background:#6a6a6a"></div>
<div style="position:absolute;left:94px;top:395px;width:1px;height:1px;background:#6a6a6a"></div>
<svg style="position:absolute;left:99px;top:386px" width="13" height="18" viewBox="0 0 13 18"><defs><linearGradient id="fg" x1="0" y1="0" x2="0" y2="1"><stop offset="0" stop-color="#f8dc7e"/><stop offset="1" stop-color="#f3cf62"/></linearGradient></defs><path d="M0 0H11V9H12V15H3V17.5L0 15Z" fill="#f5d46c"/><path d="M1 1H10.5V9.5H11.5V14.5H3.5V3.5Z" fill="#f9dc82"/><path d="M0 0.3L3.5 3.3V17.6L0 15Z" fill="#fde8a4"/><path d="M0 0.3L3.5 3.3V17.6" stroke="#efc95a" stroke-width="0.6" fill="none"/></svg>
<div style="position:absolute;left:120px;top:385px;line-height:20px;font-size:15px;white-space:pre;letter-spacing:0.8px">Dell</div>
<svg style="position:absolute;left:99px;top:408px" width="13" height="18" viewBox="0 0 13 18"><defs><linearGradient id="fg" x1="0" y1="0" x2="0" y2="1"><stop offset="0" stop-color="#f8dc7e"/><stop offset="1" stop-color="#f3cf62"/></linearGradient></defs><path d="M0 0H11V9H12V15H3V17.5L0 15Z" fill="#f5d46c"/><path d="M1 1H10.5V9.5H11.5V14.5H3.5V3.5Z" fill="#f9dc82"/><path d="M0 0.3L3.5 3.3V17.6L0 15Z" fill="#fde8a4"/><path d="M0 0.3L3.5 3.3V17.6" stroke="#efc95a" stroke-width="0.6" fill="none"/></svg>
</div></div>
<div style="position:absolute;left:596px;top:229px;width:583px;height:182px;overflow:hidden"><div style="position:absolute;left:-596px;top:-229px;width:1179px;height:739px"><svg style="position:absolute;left:604px;top:236px" width="11" height="11" viewBox="0 0 11 11"><defs><linearGradient id="eg" x1="0" y1="0" x2="0" y2="1"><stop offset="0" stop-color="#fff"/><stop offset="0.5" stop-color="#f4f4f4"/><stop offset="0.55" stop-color="#e6e6e6"/><stop offset="1" stop-color="#dcdcdc"/></linearGradient></defs><rect x="0.5" y="0.5" width="10" height="10" rx="1.5" fill="url(#eg)" stroke="#8a8a8a"/><path d="M2.5 5.5H8.5" stroke="#2f4f9f" stroke-width="1.2"/></svg>
<div style="position:absolute;left:616px;top:241px;width:1px;height:1px;background:#6a6a6a"></div>
<div style="position:absolute;left:618px;top:241px;width:1px;height:1px;background:#6a6a6a"></div>
<div style="position:absolute;left:620px;top:241px;width:1px;height:1px;background:#6a6a6a"></div>
<svg style="position:absolute;left:625px;top:233px" width="13" height="18" viewBox="0 0 13 18"><defs><linearGradient id="fg" x1="0" y1="0" x2="0" y2="1"><stop offset="0" stop-color="#f8dc7e"/><stop offset="1" stop-color="#f3cf62"/></linearGradient></defs><path d="M0 0H11V9H12V15H3V17.5L0 15Z" fill="#f5d46c"/><path d="M1 1H10.5V9.5H11.5V14.5H3.5V3.5Z" fill="#f9dc82"/><path d="M0 0.3L3.5 3.3V17.6L0 15Z" fill="#fde8a4"/><path d="M0 0.3L3.5 3.3V17.6" stroke="#efc95a" stroke-width="0.6" fill="none"/></svg>
<svg style="position:absolute;left:628px;top:231px" width="11" height="18" viewBox="0 0 11 18"><path d="M1.3 4.3C1.3 1.9 3.1 0.9 5.2 0.9C7.6 0.9 9.2 2.3 9.2 4.4C9.2 7.2 5.3 7.8 5.3 10.8V13" stroke="#000" stroke-width="2.4" fill="none"/><rect x="4" y="15" width="2.6" height="3" fill="#000"/></svg>
<svg style="position:absolute;left:646px;top:234px" width="8" height="15" viewBox="0 0 8 15"><path d="M6.8 0.5L1.2 14.5" stroke="#000" stroke-width="1.3"/></svg>
<div style="position:absolute;left:632px;top:251px;width:1px;height:1px;background:#6a6a6a"></div>
<div style="position:absolute;left:632px;top:253px;width:1px;height:1px;background:#6a6a6a"></div>
<div style="position:absolute;left:632px;top:255px;width:1px;height:1px;background:#6a6a6a"></div>
<div style="position:absolute;left:632px;top:257px;width:1px;height:1px;background:#6a6a6a"></div>
<svg style="position:absolute;left:627px;top:258px" width="11" height="11" viewBox="0 0 11 11"><defs><linearGradient id="eg" x1="0" y1="0" x2="0" y2="1"><stop offset="0" stop-color="#fff"/><stop offset="0.5" stop-color="#f4f4f4"/><stop offset="0.55" stop-color="#e6e6e6"/><stop offset="1" stop-color="#dcdcdc"/></linearGradient></defs><rect x="0.5" y="0.5" width="10" height="10" rx="1.5" fill="url(#eg)" stroke="#8a8a8a"/><path d="M2.5 5.5H8.5" stroke="#2f4f9f" stroke-width="1.2"/><path d="M5.5 2.5V8.5" stroke="#2f4f9f" stroke-width="1.2"/></svg>
<div style="position:absolute;left:639px;top:263px;width:1px;height:1px;background:#6a6a6a"></div>
<div style="position:absolute;left:641px;top:263px;width:1px;height:1px;background:#6a6a6a"></div>
<div style="position:absolute;left:643px;top:263px;width:1px;height:1px;background:#6a6a6a"></div>
<svg style="position:absolute;left:648px;top:254px" width="13" height="18" viewBox="0 0 13 18"><defs><linearGradient id="fg" x1="0" y1="0" x2="0" y2="1"><stop offset="0" stop-color="#f8dc7e"/><stop offset="1" stop-color="#f3cf62"/></linearGradient></defs><path d="M0 0H11V9H12V15H3V17.5L0 15Z" fill="#f5d46c"/><path d="M1 1H10.5V9.5H11.5V14.5H3.5V3.5Z" fill="#f9dc82"/><path d="M0 0.3L3.5 3.3V17.6L0 15Z" fill="#fde8a4"/><path d="M0 0.3L3.5 3.3V17.6" stroke="#efc95a" stroke-width="0.6" fill="none"/></svg>
<div style="position:absolute;left:668px;top:251px;width:81px;height:22px;background:#f0f0f0"></div>
<div style="position:absolute;left:669px;top:253px;line-height:20px;font-size:15px;white-space:pre;letter-spacing:0.27px">public_html</div>
</div></div>
<div style="position:absolute;left:-1px;top:417px;width:590px;height:1px;background:#a0a0a0"></div>
<div style="position:absolute;left:-1px;top:417px;width:1px;height:319px;background:#a0a0a0"></div>
<div style="position:absolute;left:-1px;top:735px;width:590px;height:1px;background:#fff"></div>
<div style="position:absolute;left:588px;top:417px;width:1px;height:319px;background:#fff"></div>
<div style="position:absolute;left:0px;top:418px;width:588px;height:1px;background:#696969"></div>
<div style="position:absolute;left:0px;top:418px;width:1px;height:317px;background:#696969"></div>
<div style="position:absolute;left:0px;top:734px;width:588px;height:1px;background:#e3e3e3"></div>
<div style="position:absolute;left:587px;top:418px;width:1px;height:317px;background:#e3e3e3"></div>
<div style="position:absolute;left:1px;top:419px;width:587px;height:287px;background:#fff"></div>
<div style="position:absolute;left:1px;top:706px;width:587px;height:1px;background:#e3e3e3"></div>
<div style="position:absolute;left:1px;top:707px;width:587px;height:27px;background:#f0f0f0"></div>
<div style="position:absolute;left:594px;top:417px;width:590px;height:1px;background:#a0a0a0"></div>
<div style="position:absolute;left:594px;top:417px;width:1px;height:319px;background:#a0a0a0"></div>
<div style="position:absolute;left:594px;top:735px;width:590px;height:1px;background:#fff"></div>
<div style="position:absolute;left:1183px;top:417px;width:1px;height:319px;background:#fff"></div>
<div style="position:absolute;left:595px;top:418px;width:588px;height:1px;background:#696969"></div>
<div style="position:absolute;left:595px;top:418px;width:1px;height:317px;background:#696969"></div>
<div style="position:absolute;left:595px;top:734px;width:588px;height:1px;background:#e3e3e3"></div>
<div style="position:absolute;left:1182px;top:418px;width:1px;height:317px;background:#e3e3e3"></div>
<div style="position:absolute;left:596px;top:419px;width:583px;height:287px;background:#fff"></div>
<div style="position:absolute;left:596px;top:706px;width:583px;height:1px;background:#e3e3e3"></div>
<div style="position:absolute;left:596px;top:707px;width:583px;height:27px;background:#f0f0f0"></div>
<div style="position:absolute;left:3px;top:712px;line-height:20px;font-size:15px;white-space:pre;letter-spacing:-0.14px">11 files and 24 directories. Total size: 8.122.388 bytes</div>
<div style="position:absolute;left:597px;top:712px;line-height:20px;font-size:15px;white-space:pre;letter-spacing:-0.09px">Selected 1 file. Total size: 782 bytes</div>
<div style="position:absolute;left:1px;top:419px;width:567px;height:287px;overflow:hidden"><div style="position:absolute;left:-1px;top:-419px;width:1179px;height:739px"><div style="position:absolute;left:6px;top:423px;line-height:20px;font-size:15px;white-space:pre;">Filename</div>
<div style="position:absolute;right:933px;top:423px;line-height:20px;font-size:15px;white-space:pre;text-align:right;">Filesize</div>
<div style="position:absolute;left:256px;top:423px;line-height:20px;font-size:15px;white-space:pre;">Filetype</div>
<div style="position:absolute;left:376px;top:423px;line-height:20px;font-size:15px;white-space:pre;letter-spacing:0.35px">Last modified</div>
<div style="position:absolute;left:170px;top:419px;width:1px;height:26px;background:#e5e5e5"></div>
<div style="position:absolute;left:250px;top:419px;width:1px;height:26px;background:#e5e5e5"></div>
<div style="position:absolute;left:370px;top:419px;width:1px;height:26px;background:#e5e5e5"></div>
<div style="position:absolute;left:490px;top:419px;width:1px;height:26px;background:#e5e5e5"></div>
<svg style="position:absolute;left:82px;top:420px" width="10" height="6" viewBox="0 0 10 6"><path d="M0.5 5L5 0.8L9.5 5" stroke="#8a8a8a" stroke-width="1" fill="none"/></svg>
<svg style="position:absolute;left:8px;top:449px" width="13" height="18" viewBox="0 0 13 18"><defs><linearGradient id="fg" x1="0" y1="0" x2="0" y2="1"><stop offset="0" stop-color="#f8dc7e"/><stop offset="1" stop-color="#f3cf62"/></linearGradient></defs><path d="M0 0H11V9H12V15H3V17.5L0 15Z" fill="#f5d46c"/><path d="M1 1H10.5V9.5H11.5V14.5H3.5V3.5Z" fill="#f9dc82"/><path d="M0 0.3L3.5 3.3V17.6L0 15Z" fill="#fde8a4"/><path d="M0 0.3L3.5 3.3V17.6" stroke="#efc95a" stroke-width="0.6" fill="none"/></svg>
<div style="position:absolute;left:27px;top:448px;line-height:20px;font-size:15px;white-space:pre;">..</div>
<svg style="position:absolute;left:6px;top:472px" width="18" height="18" viewBox="0 0 18 18"><path d="M9 0L18 3.5V14.5L9 18L0 14.5V3.5Z" fill="#2fb9d4"/><path d="M0 3.5L9 0L18 3.5L9 5.5Z" fill="#5acde3"/><path d="M0 4.5L9 6V12L0 13.5Z" fill="#d9f2f8"/><path d="M9 5.5L18 3.5V14.5L9 12Z" fill="#06a3d6"/><path d="M9 12L18 14.5L9 18Z" fill="#0a6f95"/><path d="M0 13.5L9 12V18L0 14.5Z" fill="#3ec3d8"/></svg>
<div style="position:absolute;left:27px;top:472px;line-height:20px;font-size:15px;white-space:pre;">3D Objects</div>
<div style="position:absolute;left:256px;top:472px;line-height:20px;font-size:15px;white-space:pre;letter-spacing:0.3px">File folder</div>
<div style="position:absolute;left:376px;top:472px;line-height:20px;font-size:15px;white-space:pre;letter-spacing:-0.1px">03/08/21 12:38...</div>
<svg style="position:absolute;left:8px;top:497px" width="13" height="18" viewBox="0 0 13 18"><defs><linearGradient id="fg" x1="0" y1="0" x2="0" y2="1"><stop offset="0" stop-color="#f8dc7e"/><stop offset="1" stop-color="#f3cf62"/></linearGradient></defs><path d="M0 0H11V9H12V15H3V17.5L0 15Z" fill="#f5d46c"/><path d="M1 1H10.5V9.5H11.5V14.5H3.5V3.5Z" fill="#f9dc82"/><path d="M0 0.3L3.5 3.3V17.6L0 15Z" fill="#fde8a4"/><path d="M0 0.3L3.5 3.3V17.6" stroke="#efc95a" stroke-width="0.6" fill="none"/></svg>
<div style="position:absolute;left:27px;top:496px;line-height:20px;font-size:15px;white-space:pre;letter-spacing:0.3px">AppData</div>
<div style="position:absolute;left:256px;top:496px;line-height:20px;font-size:15px;white-space:pre;letter-spacing:0.3px">File folder</div>
<div style="position:absolute;left:376px;top:496px;line-height:20px;font-size:15px;white-space:pre;letter-spacing:-0.1px">03/08/21 12:37...</div>
<svg style="position:absolute;left:8px;top:521px" width="13" height="18" viewBox="0 0 13 18"><defs><linearGradient id="fg" x1="0" y1="0" x2="0" y2="1"><stop offset="0" stop-color="#f8dc7e"/><stop offset="1" stop-color="#f3cf62"/></linearGradient></defs><path d="M0 0H11V9H12V15H3V17.5L0 15Z" fill="#f5d46c"/><path d="M1 1H10.5V9.5H11.5V14.5H3.5V3.5Z" fill="#f9dc82"/><path d="M0 0.3L3.5 3.3V17.6L0 15Z" fill="#fde8a4"/><path d="M0 0.3L3.5 3.3V17.6" stroke="#efc95a" stroke-width="0.6" fill="none"/></svg>
<div style="position:absolute;left:27px;top:520px;line-height:20px;font-size:15px;white-space:pre;letter-spacing:0.27px">Application Data</div>
<div style="position:absolute;left:256px;top:520px;line-height:20px;font-size:15px;white-space:pre;letter-spacing:0.3px">File folder</div>
<div style="position:absolute;left:376px;top:520px;line-height:20px;font-size:15px;white-space:pre;letter-spacing:-0.1px">05/05/21 12:38...</div>
<svg style="position:absolute;left:8px;top:545px" width="13" height="18" viewBox="0 0 13 18"><defs><linearGradient id="fg" x1="0" y1="0" x2="0" y2="1"><stop offset="0" stop-color="#f8dc7e"/><stop offset="1" stop-color="#f3cf62"/></linearGradient></defs><path d="M0 0H11V9H12V15H3V17.5L0 15Z" fill="#f5d46c"/><path d="M1 1H10.5V9.5H11.5V14.5H3.5V3.5Z" fill="#f9dc82"/><path d="M0 0.3L3.5 3.3V17.6L0 15Z" fill="#fde8a4"/><path d="M0 0.3L3.5 3.3V17.6" stroke="#efc95a" stroke-width="0.6" fill="none"/></svg>
<svg style="position:absolute;left:13px;top:553px" width="11" height="8" viewBox="0 0 11 8"><rect x="0.5" y="0.5" width="10" height="7" fill="#bfe0f5" stroke="#3d7fb7"/><circle cx="3.3" cy="3" r="1.1" fill="#7a5a3a"/><rect x="2" y="4.3" width="2.6" height="2" fill="#3f9a4a"/><path d="M5.5 2.5H8.5M5.5 4.5H8.5" stroke="#3d6f9f" stroke-width="1"/></svg>
<div style="position:absolute;left:27px;top:544px;line-height:20px;font-size:15px;white-space:pre;letter-spacing:-0.2px">Contacts</div>
<div style="position:absolute;left:256px;top:544px;line-height:20px;font-size:15px;white-space:pre;letter-spacing:0.3px">File folder</div>
<div style="position:absolute;left:376px;top:544px;line-height:20px;font-size:15px;white-space:pre;letter-spacing:-0.1px">03/08/21 12:38...</div>
<svg style="position:absolute;left:8px;top:569px" width="13" height="18" viewBox="0 0 13 18"><defs><linearGradient id="fg" x1="0" y1="0" x2="0" y2="1"><stop offset="0" stop-color="#f8dc7e"/><stop offset="1" stop-color="#f3cf62"/></linearGradient></defs><path d="M0 0H11V9H12V15H3V17.5L0 15Z" fill="#f5d46c"/><path d="M1 1H10.5V9.5H11.5V14.5H3.5V3.5Z" fill="#f9dc82"/><path d="M0 0.3L3.5 3.3V17.6L0 15Z" fill="#fde8a4"/><path d="M0 0.3L3.5 3.3V17.6" stroke="#efc95a" stroke-width="0.6" fill="none"/></svg>
<div style="position:absolute;left:27px;top:568px;line-height:20px;font-size:15px;white-space:pre;letter-spacing:-0.2px">Cookies</div>
<div style="position:absolute;left:256px;top:568px;line-height:20px;font-size:15px;white-space:pre;letter-spacing:0.3px">File folder</div>
<div style="position:absolute;left:376px;top:568px;line-height:20px;font-size:15px;white-space:pre;letter-spacing:-0.1px">03/09/21 15:11...</div>
<svg style="position:absolute;left:6px;top:594px" width="18" height="13" viewBox="0 0 18 13"><rect x="0.5" y="0.5" width="17" height="12" fill="#1a8ff7" stroke="#0b6fd0"/><path d="M6 12L16 1H17.5V5L11 12Z" fill="#3aa2fb" opacity="0.6"/><rect x="0" y="10.5" width="18" height="2.5" fill="#0a5fae"/><rect x="1" y="11" width="1.2" height="1.2" fill="#fff"/><rect x="14" y="11" width="1.2" height="1.2" fill="#fff"/><rect x="16" y="11" width="1.2" height="1.2" fill="#fff"/></svg>
<div style="position:absolute;left:27px;top:592px;line-height:20px;font-size:15px;white-space:pre;">Desktop</div>
<div style="position:absolute;left:256px;top:592px;line-height:20px;font-size:15px;white-space:pre;letter-spacing:0.3px">File folder</div>
<div style="position:absolute;left:376px;top:592px;line-height:20px;font-size:15px;white-space:pre;letter-spacing:-0.1px">04/15/21 18:36...</div>
<svg style="position:absolute;left:8px;top:616px" width="14" height="18" viewBox="0 0 14 18"><path d="M0.5 0.5H10.5L13.5 3.5V17.5H0.5Z" fill="#fcfcfc" stroke="#8a8a8a"/><path d="M10.5 0.5V3.5H13.5" fill="#fff" stroke="#8a8a8a" stroke-width="0.8"/><path d="M2.2 6.3L4.6 1.8M3 4.8H4.8" stroke="#1e88e5" stroke-width="1.1"/><path d="M6 3.5H9M6 5.5H12" stroke="#3aa0ea" stroke-width="1"/><path d="M2 7.5H12" stroke="#1a86e0" stroke-width="1.2"/><path d="M2 9.5H7M2 11.5H7M2 13.5H12M2 15.5H12" stroke="#a8a8a8" stroke-width="1"/><rect x="8" y="9" width="4" height="3" fill="#2f5f3a"/><rect x="8" y="9" width="4" height="1.2" fill="#5a90e0"/></svg>
<div style="position:absolute;left:27px;top:616px;line-height:20px;font-size:15px;white-space:pre;">Documents</div>
<div style="position:absolute;left:256px;top:616px;line-height:20px;font-size:15px;white-space:pre;letter-spacing:0.3px">File folder</div>
<div style="position:absolute;left:376px;top:616px;line-height:20px;font-size:15px;white-space:pre;letter-spacing:-0.1px">03/17/21 11:59...</div>
<svg style="position:absolute;left:6px;top:641px" width="17" height="17" viewBox="0 0 17 17"><path d="M4.5 0H12.5V9H17L8.5 16.5L0 9H4.5Z" fill="#2a86dd"/><path d="M4.5 0H8.5V14L0 9H4.5Z" fill="#4aa0ea" opacity="0.5"/></svg>
<div style="position:absolute;left:27px;top:640px;line-height:20px;font-size:15px;white-space:pre;">Downloads</div>
<div style="position:absolute;left:256px;top:640px;line-height:20px;font-size:15px;white-space:pre;letter-spacing:0.3px">File folder</div>
<div style="position:absolute;left:376px;top:640px;line-height:20px;font-size:15px;white-space:pre;letter-spacing:-0.1px">05/05/21 12:35...</div>
<svg style="position:absolute;left:8px;top:665px" width="13" height="18" viewBox="0 0 13 18"><defs><linearGradient id="fg" x1="0" y1="0" x2="0" y2="1"><stop offset="0" stop-color="#f8dc7e"/><stop offset="1" stop-color="#f3cf62"/></linearGradient></defs><path d="M0 0H11V9H12V15H3V17.5L0 15Z" fill="#f5d46c"/><path d="M1 1H10.5V9.5H11.5V14.5H3.5V3.5Z" fill="#f9dc82"/><path d="M0 0.3L3.5 3.3V17.6L0 15Z" fill="#fde8a4"/><path d="M0 0.3L3.5 3.3V17.6" stroke="#efc95a" stroke-width="0.6" fill="none"/></svg>
<svg style="position:absolute;left:13.5px;top:670px" width="13" height="13" viewBox="0 0 13 13"><path d="M6 0.3L7.9 4.3L12 4.8L8.9 7.7L9.8 12L6 9.8L2.2 12L3.1 7.7L0 4.8L4.1 4.3Z" fill="#fbbd2e" stroke="#f07d1a" stroke-width="0.7"/><path d="M6 0.3L7.9 4.3L12 4.8L8.9 7.7L9.8 12L6 9.8Z" fill="#f5a623" opacity="0.6"/></svg>
<div style="position:absolute;left:27px;top:664px;line-height:20px;font-size:15px;white-space:pre;letter-spacing:-0.3px">Favorites</div>
<div style="position:absolute;left:256px;top:664px;line-height:20px;font-size:15px;white-space:pre;letter-spacing:0.3px">File folder</div>
<div style="position:absolute;left:376px;top:664px;line-height:20px;font-size:15px;white-space:pre;letter-spacing:-0.1px">03/08/21 12:38...</div>
<svg style="position:absolute;left:8px;top:689px" width="13" height="18" viewBox="0 0 13 18"><defs><linearGradient id="fg" x1="0" y1="0" x2="0" y2="1"><stop offset="0" stop-color="#f8dc7e"/><stop offset="1" stop-color="#f3cf62"/></linearGradient></defs><path d="M0 0H11V9H12V15H3V17.5L0 15Z" fill="#f5d46c"/><path d="M1 1H10.5V9.5H11.5V14.5H3.5V3.5Z" fill="#f9dc82"/><path d="M0 0.3L3.5 3.3V17.6L0 15Z" fill="#fde8a4"/><path d="M0 0.3L3.5 3.3V17.6" stroke="#efc95a" stroke-width="0.6" fill="none"/></svg>
<svg style="position:absolute;left:14px;top:695px" width="9" height="10" viewBox="0 0 9 10"><path d="M1 0.2H8.2V7.2Z" fill="#2a86dd" stroke="#1f6fc0" stroke-width="0.5"/><path d="M2.2 9.8C1.2 7 2.2 4.5 5.5 2.2" stroke="#2a86dd" stroke-width="2.8" fill="none"/></svg>
<div style="position:absolute;left:27px;top:688px;line-height:20px;font-size:15px;white-space:pre;letter-spacing:-0.4px">Links</div>
<div style="position:absolute;left:256px;top:688px;line-height:20px;font-size:15px;white-space:pre;letter-spacing:0.3px">File folder</div>
<div style="position:absolute;left:376px;top:688px;line-height:20px;font-size:15px;white-space:pre;letter-spacing:-0.1px">03/08/21 12:38...</div>
</div></div>
<div style="position:absolute;left:568px;top:419px;width:20px;height:287px;background:#f0f0f0"></div>
<div style="position:absolute;left:568px;top:440px;width:19px;height:68px;background:#cdcdcd"></div>
<svg style="position:absolute;left:572px;top:424px" width="12" height="9" viewBox="0 0 12 9"><path d="M1.2 7L6 2.3L10.8 7" stroke="#606060" stroke-width="2" fill="none"/></svg>
<svg style="position:absolute;left:572px;top:690px" width="12" height="9" viewBox="0 0 12 9"><path d="M1.2 2L6 6.7L10.8 2" stroke="#606060" stroke-width="2" fill="none"/></svg>
<div style="position:absolute;left:596px;top:419px;width:563px;height:267px;overflow:hidden"><div style="position:absolute;left:-596px;top:-419px;width:1179px;height:739px"><div style="position:absolute;left:601px;top:423px;line-height:20px;font-size:15px;white-space:pre;">Filename</div>
<div style="position:absolute;right:363px;top:423px;line-height:20px;font-size:15px;white-space:pre;text-align:right;">Filesize</div>
<div style="position:absolute;left:826px;top:423px;line-height:20px;font-size:15px;white-space:pre;">Filetype</div>
<div style="position:absolute;left:906px;top:423px;line-height:20px;font-size:15px;white-space:pre;">Last modifi...</div>
<div style="position:absolute;left:1006px;top:423px;line-height:20px;font-size:15px;white-space:pre;letter-spacing:-0.5px">Permissi...</div>
<div style="position:absolute;left:1086px;top:423px;line-height:20px;font-size:15px;white-space:pre;">Owner/Gr...</div>
<div style="position:absolute;left:745px;top:419px;width:1px;height:26px;background:#e5e5e5"></div>
<div style="position:absolute;left:820px;top:419px;width:1px;height:26px;background:#e5e5e5"></div>
<div style="position:absolute;left:900px;top:419px;width:1px;height:26px;background:#e5e5e5"></div>
<div style="position:absolute;left:1000px;top:419px;width:1px;height:26px;background:#e5e5e5"></div>
<div style="position:absolute;left:1080px;top:419px;width:1px;height:26px;background:#e5e5e5"></div>
<svg style="position:absolute;left:666px;top:420px" width="10" height="6" viewBox="0 0 10 6"><path d="M0.5 5L5 0.8L9.5 5" stroke="#8a8a8a" stroke-width="1" fill="none"/></svg>
<svg style="position:absolute;left:603px;top:449px" width="13" height="18" viewBox="0 0 13 18"><defs><linearGradient id="fg" x1="0" y1="0" x2="0" y2="1"><stop offset="0" stop-color="#f8dc7e"/><stop offset="1" stop-color="#f3cf62"/></linearGradient></defs><path d="M0 0H11V9H12V15H3V17.5L0 15Z" fill="#f5d46c"/><path d="M1 1H10.5V9.5H11.5V14.5H3.5V3.5Z" fill="#f9dc82"/><path d="M0 0.3L3.5 3.3V17.6L0 15Z" fill="#fde8a4"/><path d="M0 0.3L3.5 3.3V17.6" stroke="#efc95a" stroke-width="0.6" fill="none"/></svg>
<div style="position:absolute;left:621px;top:448px;line-height:20px;font-size:15px;white-space:pre;">..</div>
<svg style="position:absolute;left:603px;top:473px" width="13" height="18" viewBox="0 0 13 18"><defs><linearGradient id="fg" x1="0" y1="0" x2="0" y2="1"><stop offset="0" stop-color="#f8dc7e"/><stop offset="1" stop-color="#f3cf62"/></linearGradient></defs><path d="M0 0H11V9H12V15H3V17.5L0 15Z" fill="#f5d46c"/><path d="M1 1H10.5V9.5H11.5V14.5H3.5V3.5Z" fill="#f9dc82"/><path d="M0 0.3L3.5 3.3V17.6L0 15Z" fill="#fde8a4"/><path d="M0 0.3L3.5 3.3V17.6" stroke="#efc95a" stroke-width="0.6" fill="none"/></svg>
<div style="position:absolute;left:621px;top:472px;line-height:20px;font-size:15px;white-space:pre;letter-spacing:0.7px">wp-admin</div>
<div style="position:absolute;left:826px;top:472px;width:74px;overflow:hidden;line-height:20px;font-size:15px;white-space:pre;letter-spacing:0.3px">File folder</div>
<div style="position:absolute;left:906px;top:472px;width:92px;overflow:hidden;line-height:20px;font-size:15px;white-space:pre;">03/14/21 1...</div>
<div style="position:absolute;left:1006px;top:472px;width:72px;overflow:hidden;line-height:20px;font-size:15px;white-space:pre;">flcdmpe ...</div>
<div style="position:absolute;left:1086px;top:472px;line-height:20px;font-size:15px;white-space:pre;">u6386134...</div>
<svg style="position:absolute;left:603px;top:497px" width="13" height="18" viewBox="0 0 13 18"><defs><linearGradient id="fg" x1="0" y1="0" x2="0" y2="1"><stop offset="0" stop-color="#f8dc7e"/><stop offset="1" stop-color="#f3cf62"/></linearGradient></defs><path d="M0 0H11V9H12V15H3V17.5L0 15Z" fill="#f5d46c"/><path d="M1 1H10.5V9.5H11.5V14.5H3.5V3.5Z" fill="#f9dc82"/><path d="M0 0.3L3.5 3.3V17.6L0 15Z" fill="#fde8a4"/><path d="M0 0.3L3.5 3.3V17.6" stroke="#efc95a" stroke-width="0.6" fill="none"/></svg>
<div style="position:absolute;left:621px;top:496px;line-height:20px;font-size:15px;white-space:pre;letter-spacing:0.4px">wp-content</div>
<div style="position:absolute;left:826px;top:496px;width:74px;overflow:hidden;line-height:20px;font-size:15px;white-space:pre;letter-spacing:0.3px">File folder</div>
<div style="position:absolute;left:906px;top:496px;width:92px;overflow:hidden;line-height:20px;font-size:15px;white-space:pre;">05/05/21 1...</div>
<div style="position:absolute;left:1006px;top:496px;width:72px;overflow:hidden;line-height:20px;font-size:15px;white-space:pre;">flcdmpe ...</div>
<div style="position:absolute;left:1086px;top:496px;line-height:20px;font-size:15px;white-space:pre;">u6386134...</div>
<svg style="position:absolute;left:603px;top:521px" width="13" height="18" viewBox="0 0 13 18"><defs><linearGradient id="fg" x1="0" y1="0" x2="0" y2="1"><stop offset="0" stop-color="#f8dc7e"/><stop offset="1" stop-color="#f3cf62"/></linearGradient></defs><path d="M0 0H11V9H12V15H3V17.5L0 15Z" fill="#f5d46c"/><path d="M1 1H10.5V9.5H11.5V14.5H3.5V3.5Z" fill="#f9dc82"/><path d="M0 0.3L3.5 3.3V17.6L0 15Z" fill="#fde8a4"/><path d="M0 0.3L3.5 3.3V17.6" stroke="#efc95a" stroke-width="0.6" fill="none"/></svg>
<div style="position:absolute;left:621px;top:520px;line-height:20px;font-size:15px;white-space:pre;letter-spacing:0.2px">wp-includes</div>
<div style="position:absolute;left:826px;top:520px;width:74px;overflow:hidden;line-height:20px;font-size:15px;white-space:pre;letter-spacing:0.3px">File folder</div>
<div style="position:absolute;left:906px;top:520px;width:92px;overflow:hidden;line-height:20px;font-size:15px;white-space:pre;">03/14/21 1...</div>
<div style="position:absolute;left:1006px;top:520px;width:72px;overflow:hidden;line-height:20px;font-size:15px;white-space:pre;">flcdmpe ...</div>
<div style="position:absolute;left:1086px;top:520px;line-height:20px;font-size:15px;white-space:pre;">u6386134...</div>
<svg style="position:absolute;left:603px;top:544px" width="14" height="18" viewBox="0 0 14 18"><path d="M0.5 0.5H10L13.5 4V17.5H0.5Z" fill="#f4f5f7" stroke="#8c8c8c"/><path d="M10 0.5V4H13.5" fill="#fff" stroke="#8c8c8c"/></svg>
<div style="position:absolute;left:621px;top:544px;line-height:20px;font-size:15px;white-space:pre;letter-spacing:-0.35px">.htaccess</div>
<div style="position:absolute;right:363px;top:544px;line-height:20px;font-size:15px;white-space:pre;text-align:right;">522</div>
<div style="position:absolute;left:826px;top:544px;width:74px;overflow:hidden;line-height:20px;font-size:15px;white-space:pre;">HTACCE...</div>
<div style="position:absolute;left:906px;top:544px;width:92px;overflow:hidden;line-height:20px;font-size:15px;white-space:pre;">04/24/21 1...</div>
<div style="position:absolute;left:1006px;top:544px;width:72px;overflow:hidden;line-height:20px;font-size:15px;white-space:pre;">adfrw (0...</div>
<div style="position:absolute;left:1086px;top:544px;line-height:20px;font-size:15px;white-space:pre;">u6386134...</div>
<svg style="position:absolute;left:603px;top:568px" width="14" height="18" viewBox="0 0 14 18"><path d="M0.5 0.5H10L13.5 4V17.5H0.5Z" fill="#f4f5f7" stroke="#8c8c8c"/><path d="M10 0.5V4H13.5" fill="#fff" stroke="#8c8c8c"/></svg>
<div style="position:absolute;left:621px;top:568px;line-height:20px;font-size:15px;white-space:pre;letter-spacing:-0.33px">.htaccess.bk</div>
<div style="position:absolute;right:363px;top:568px;line-height:20px;font-size:15px;white-space:pre;text-align:right;">714</div>
<div style="position:absolute;left:826px;top:568px;width:74px;overflow:hidden;line-height:20px;font-size:15px;white-space:pre;">BK File</div>
<div style="position:absolute;left:906px;top:568px;width:92px;overflow:hidden;line-height:20px;font-size:15px;white-space:pre;">03/14/21 1...</div>
<div style="position:absolute;left:1006px;top:568px;width:72px;overflow:hidden;line-height:20px;font-size:15px;white-space:pre;">adfrw (0...</div>
<div style="position:absolute;left:1086px;top:568px;line-height:20px;font-size:15px;white-space:pre;">u6386134...</div>
<div style="position:absolute;left:620px;top:589px;width:539px;height:24px;background:#efefef"></div>
<svg style="position:absolute;left:603px;top:592px" width="14" height="18" viewBox="0 0 14 18"><path d="M0.5 0.5H10L13.5 4V17.5H0.5Z" fill="#bcd9f2" stroke="#6d8db0"/><path d="M10 0.5V4H13.5" fill="#fff" stroke="#6d8db0"/></svg>
<div style="position:absolute;left:621px;top:592px;line-height:20px;font-size:15px;white-space:pre;">.maintenance</div>
<div style="position:absolute;right:363px;top:592px;line-height:20px;font-size:15px;white-space:pre;text-align:right;">782</div>
<div style="position:absolute;left:826px;top:592px;width:74px;overflow:hidden;line-height:20px;font-size:15px;white-space:pre;">MAINTE...</div>
<div style="position:absolute;left:906px;top:592px;width:92px;overflow:hidden;line-height:20px;font-size:15px;white-space:pre;">03/21/21 1...</div>
<div style="position:absolute;left:1006px;top:592px;width:72px;overflow:hidden;line-height:20px;font-size:15px;white-space:pre;">adfrw (0...</div>
<div style="position:absolute;left:1086px;top:592px;line-height:20px;font-size:15px;white-space:pre;">u6386134...</div>
<svg style="position:absolute;left:603px;top:616px" width="14" height="18" viewBox="0 0 14 18"><path d="M0.5 0.5H10L13.5 4V17.5H0.5Z" fill="#f4f5f7" stroke="#8c8c8c"/><path d="M10 0.5V4H13.5" fill="#fff" stroke="#8c8c8c"/></svg>
<div style="position:absolute;left:621px;top:616px;line-height:20px;font-size:15px;white-space:pre;letter-spacing:0.3px">default.php</div>
<div style="position:absolute;right:363px;top:616px;line-height:20px;font-size:15px;white-space:pre;text-align:right;letter-spacing:-0.45px">10.784</div>
<div style="position:absolute;left:826px;top:616px;width:74px;overflow:hidden;line-height:20px;font-size:15px;white-space:pre;letter-spacing:-0.4px">PHP File</div>
<div style="position:absolute;left:906px;top:616px;width:92px;overflow:hidden;line-height:20px;font-size:15px;white-space:pre;">03/14/21 1...</div>
<div style="position:absolute;left:1006px;top:616px;width:72px;overflow:hidden;line-height:20px;font-size:15px;white-space:pre;">adfrw (0...</div>
<div style="position:absolute;left:1086px;top:616px;line-height:20px;font-size:15px;white-space:pre;">u6386134...</div>
<svg style="position:absolute;left:603px;top:640px" width="14" height="18" viewBox="0 0 14 18"><path d="M0.5 0.5H10L13.5 4V17.5H0.5Z" fill="#f4f5f7" stroke="#8c8c8c"/><path d="M10 0.5V4H13.5" fill="#fff" stroke="#8c8c8c"/></svg>
<div style="position:absolute;left:621px;top:640px;line-height:20px;font-size:15px;white-space:pre;">index.php</div>
<div style="position:absolute;right:363px;top:640px;line-height:20px;font-size:15px;white-space:pre;text-align:right;">405</div>
<div style="position:absolute;left:826px;top:640px;width:74px;overflow:hidden;line-height:20px;font-size:15px;white-space:pre;letter-spacing:-0.4px">PHP File</div>
<div style="position:absolute;left:906px;top:640px;width:92px;overflow:hidden;line-height:20px;font-size:15px;white-space:pre;">03/14/21 1...</div>
<div style="position:absolute;left:1006px;top:640px;width:72px;overflow:hidden;line-height:20px;font-size:15px;white-space:pre;">adfrw (0...</div>
<div style="position:absolute;left:1086px;top:640px;line-height:20px;font-size:15px;white-space:pre;">u6386134...</div>
<svg style="position:absolute;left:603px;top:664px" width="14" height="18" viewBox="0 0 14 18"><path d="M0.5 0.5H10L13.5 4V17.5H0.5Z" fill="#f4f5f7" stroke="#8c8c8c"/><path d="M10 0.5V4H13.5" fill="#fff" stroke="#8c8c8c"/><path d="M2.5 5.5H11.5" stroke="#8c8c8c" stroke-width="1"/><path d="M2.5 7.5H11.5" stroke="#8c8c8c" stroke-width="1"/><path d="M2.5 9.5H11.5" stroke="#8c8c8c" stroke-width="1"/><path d="M2.5 11.5H11.5" stroke="#8c8c8c" stroke-width="1"/><path d="M2.5 13.5H11.5" stroke="#8c8c8c" stroke-width="1"/><path d="M2.5 15.5H11.5" stroke="#8c8c8c" stroke-width="1"/></svg>
<div style="position:absolute;left:621px;top:664px;line-height:20px;font-size:15px;white-space:pre;">license.txt</div>
<div style="position:absolute;right:363px;top:664px;line-height:20px;font-size:15px;white-space:pre;text-align:right;letter-spacing:-0.45px">19.915</div>
<div style="position:absolute;left:826px;top:664px;width:74px;overflow:hidden;line-height:20px;font-size:15px;white-space:pre;">Text Doc...</div>
<div style="position:absolute;left:906px;top:664px;width:92px;overflow:hidden;line-height:20px;font-size:15px;white-space:pre;">03/14/21 1...</div>
<div style="position:absolute;left:1006px;top:664px;width:72px;overflow:hidden;line-height:20px;font-size:15px;white-space:pre;">adfrw (0...</div>
<div style="position:absolute;left:1086px;top:664px;line-height:20px;font-size:15px;white-space:pre;">u6386134...</div>
</div></div>
<div style="position:absolute;left:1159px;top:419px;width:20px;height:267px;background:#f0f0f0"></div>
<div style="position:absolute;left:1159px;top:440px;width:19px;height:89px;background:#cdcdcd"></div>
<svg style="position:absolute;left:1163px;top:424px" width="12" height="9" viewBox="0 0 12 9"><path d="M1.2 7L6 2.3L10.8 7" stroke="#606060" stroke-width="2" fill="none"/></svg>
<svg style="position:absolute;left:1163px;top:670px" width="12" height="9" viewBox="0 0 12 9"><path d="M1.2 2L6 6.7L10.8 2" stroke="#606060" stroke-width="2" fill="none"/></svg>
<div style="position:absolute;left:596px;top:686px;width:563px;height:20px;background:#f0f0f0"></div>
<div style="position:absolute;left:617px;top:687px;width:513px;height:19px;background:#cdcdcd"></div>
<svg style="position:absolute;left:601px;top:691px" width="8" height="10" viewBox="0 0 8 10"><path d="M6.5 1L2.5 5L6.5 9" stroke="#606060" stroke-width="2" fill="none"/></svg>
<svg style="position:absolute;left:1144px;top:691px" width="8" height="10" viewBox="0 0 8 10"><path d="M1.5 1L5.5 5L1.5 9" stroke="#606060" stroke-width="2" fill="none"/></svg>
<div style="position:absolute;left:1159px;top:686px;width:20px;height:20px;background:#f0f0f0"></div>
<div style="position:absolute;left:595px;top:589px;width:183px;height:28px;border:4.5px solid #ff0000;border-radius:3px;box-sizing:border-box"></div>

</body></html>
